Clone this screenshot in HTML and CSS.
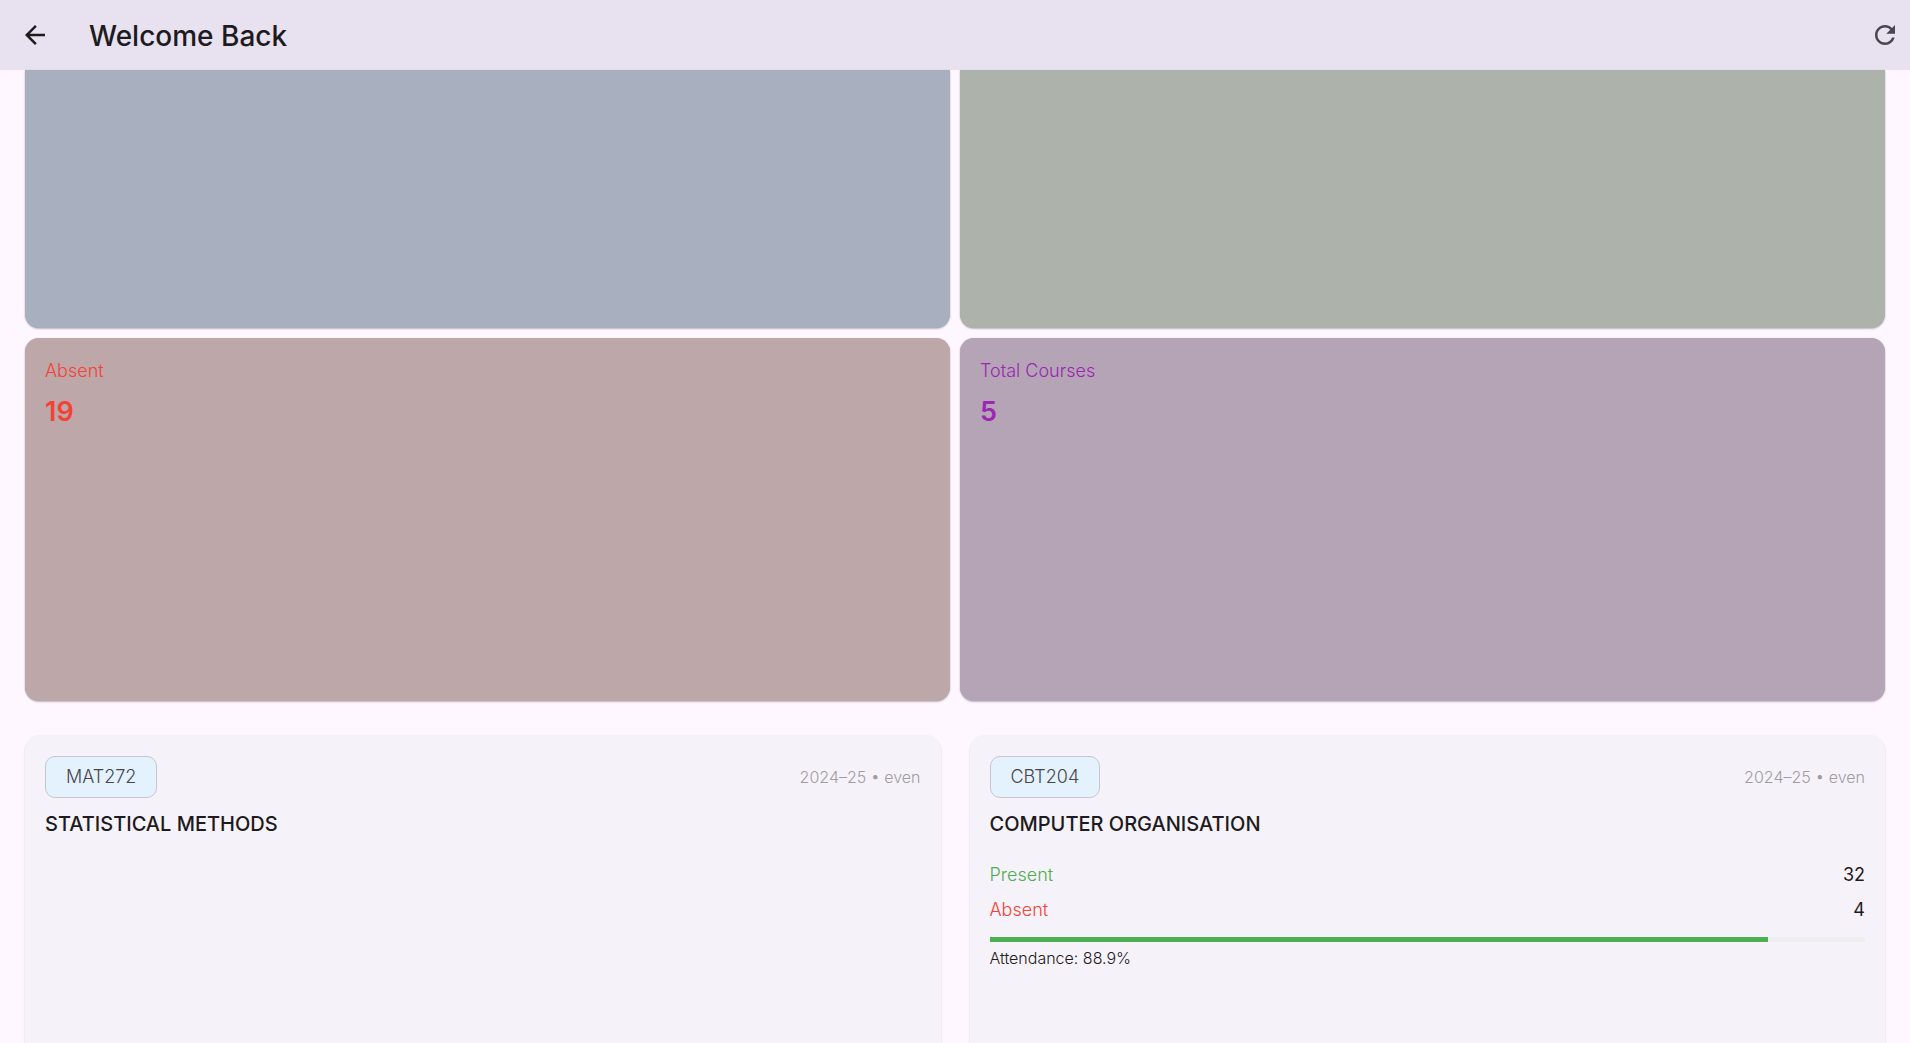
FILE: index.html
```html
<!DOCTYPE html>
<html lang="en">
<head>
<meta charset="utf-8">
<meta name="viewport" content="width=device-width, initial-scale=1">
<title>Welcome Back</title>
<link rel="stylesheet" href="styles.css">
</head>
<body>
<header class="app-bar">
  <button class="icon-button" type="button" aria-label="Back">
    <svg class="icon icon-back" viewBox="4 4 16 16"><path d="M20 11H7.83l5.59-5.59L12 4l-8 8 8 8 1.41-1.41L7.83 13H20v-2z"/></svg>
  </button>
  <h1 class="app-title">Welcome Back</h1>
  <button class="icon-button refresh" type="button" aria-label="Refresh">
    <svg class="icon" viewBox="4 4 16 16"><path d="M17.65 6.35C16.2 4.9 14.21 4 12 4c-4.42 0-7.99 3.58-7.99 8s3.57 8 7.99 8c3.73 0 6.84-2.55 7.73-6h-2.08c-.82 2.33-3.04 4-5.65 4-3.31 0-6-2.69-6-6s2.69-6 6-6c1.66 0 3.14.69 4.22 1.78L13 11h7V4l-2.35 2.35z"/></svg>
  </button>
</header>
<main class="content">
  <section class="stats">
    <article class="stat stat-cut stat-blue"></article>
    <article class="stat stat-cut stat-green"></article>
    <article class="stat stat-red">
      <h2 class="stat-label">Absent</h2>
      <p class="stat-value">19</p>
    </article>
    <article class="stat stat-purple">
      <h2 class="stat-label">Total Courses</h2>
      <p class="stat-value">5</p>
    </article>
  </section>
  <section class="courses">
    <article class="course">
      <div class="course-top"><span class="chip">MAT272</span><span class="term">2024–25 • even</span></div>
      <h2 class="course-name">STATISTICAL METHODS</h2>
    </article>
    <article class="course">
      <div class="course-top"><span class="chip">CBT204</span><span class="term">2024–25 • even</span></div>
      <h2 class="course-name">COMPUTER ORGANISATION</h2>
      <dl class="counts">
        <div class="count"><dt class="present">Present</dt><dd>32</dd></div>
        <div class="count"><dt class="absent">Absent</dt><dd>4</dd></div>
      </dl>
      <progress class="bar" id="attendance" max="100" value="88.9"></progress>
      <label class="attendance" for="attendance">Attendance: 88.9%</label>
    </article>
  </section>
</main>
</body>
</html>
```
FILE: styles.css
```css
* { box-sizing: border-box; margin: 0; padding: 0; }

body {
  display: flex;
  flex-direction: column;
  height: 100vh;
  overflow: hidden;
  background: #fef7ff;
  color: #1d1b20;
  font-family: "Inter", "Liberation Sans", sans-serif;
}

.app-bar {
  display: flex;
  flex: none;
  align-items: center;
  height: 70px;
  padding: 0 15px;
  background: #e8e1ef;
}

.icon-button {
  display: flex;
  align-items: center;
  justify-content: center;
  width: 40px;
  height: 40px;
  border: 0;
  background: none;
  color: #1d1b20;
}

.refresh { margin-left: auto; margin-right: -10px; color: #49454f; }
.icon { width: 20px; height: 20px; fill: currentColor; }
.app-title { margin-left: 34px; padding-top: 2px; font-size: 28px; line-height: 36px; font-weight: 500; }

.content {
  display: flex;
  flex: 1;
  flex-direction: column;
  min-height: 0;
}

.stats {
  display: grid;
  flex: none;
  grid-template-columns: 1fr 1fr;
  gap: 10px;
  padding: 0 25px;
}

.stat {
  aspect-ratio: 925 / 363;
  padding: 20px;
  border-radius: 14px;
  box-shadow: 0 1px 2px #00000040, 0 0 1px #00000030;
}

.stat-cut { aspect-ratio: 925 / 258; border-radius: 0 0 14px 14px; }
.stat-blue { background: #a8afbf; }
.stat-green { background: #adb2ab; }
.stat-red { background: #bda7a9; color: #f44336; }
.stat-purple { background: #b4a4b6; color: #9c27b0; }
.stat-label { padding-top: 1px; font-size: 18px; line-height: 24px; font-weight: 300; }
.stat-value { margin-top: 11px; font-size: 27px; line-height: 36px; font-weight: 600; }

.courses {
  display: grid;
  flex: 1;
  grid-template-columns: 1fr 1fr;
  gap: 29px;
  margin-top: 34px;
  padding: 0 25px;
}

.course {
  display: flex;
  flex-direction: column;
  padding: 21px 20px;
  border-radius: 16px 16px 0 0;
  background: #f6f2f9;
  box-shadow: 0 1px 2px #00000030;
}

.course-top { display: flex; align-items: center; justify-content: space-between; }

.chip {
  padding: 8px 20px;
  border: 1px solid #cac4d0;
  border-radius: 10px;
  background: #e3f2fd;
  color: #49454f;
  font-size: 18px;
  line-height: 24px;
  font-weight: 300;
}

.term { color: #9e9e9e; font-size: 16px; line-height: 20px; font-weight: 300; }
.course-name { margin-top: 12px; font-size: 20px; line-height: 28px; font-weight: 500; }
.counts { display: flex; flex-direction: column; gap: 11px; margin-top: 25px; }
.count { display: flex; justify-content: space-between; font-size: 18px; line-height: 24px; }
.count dt { font-weight: 300; }
.count dd { font-weight: 400; }
.present { color: #4caf50; }
.absent { color: #f44336; }

.bar {
  width: 100%;
  height: 5px;
  margin-top: 15px;
  border: 0;
  appearance: none;
  background: #eeeeee;
}

.bar::-webkit-progress-bar { background: #eeeeee; }
.bar::-webkit-progress-value { background: #4caf50; }
.attendance { margin-top: 6px; font-size: 16px; line-height: 20px; font-weight: 300; }
```
